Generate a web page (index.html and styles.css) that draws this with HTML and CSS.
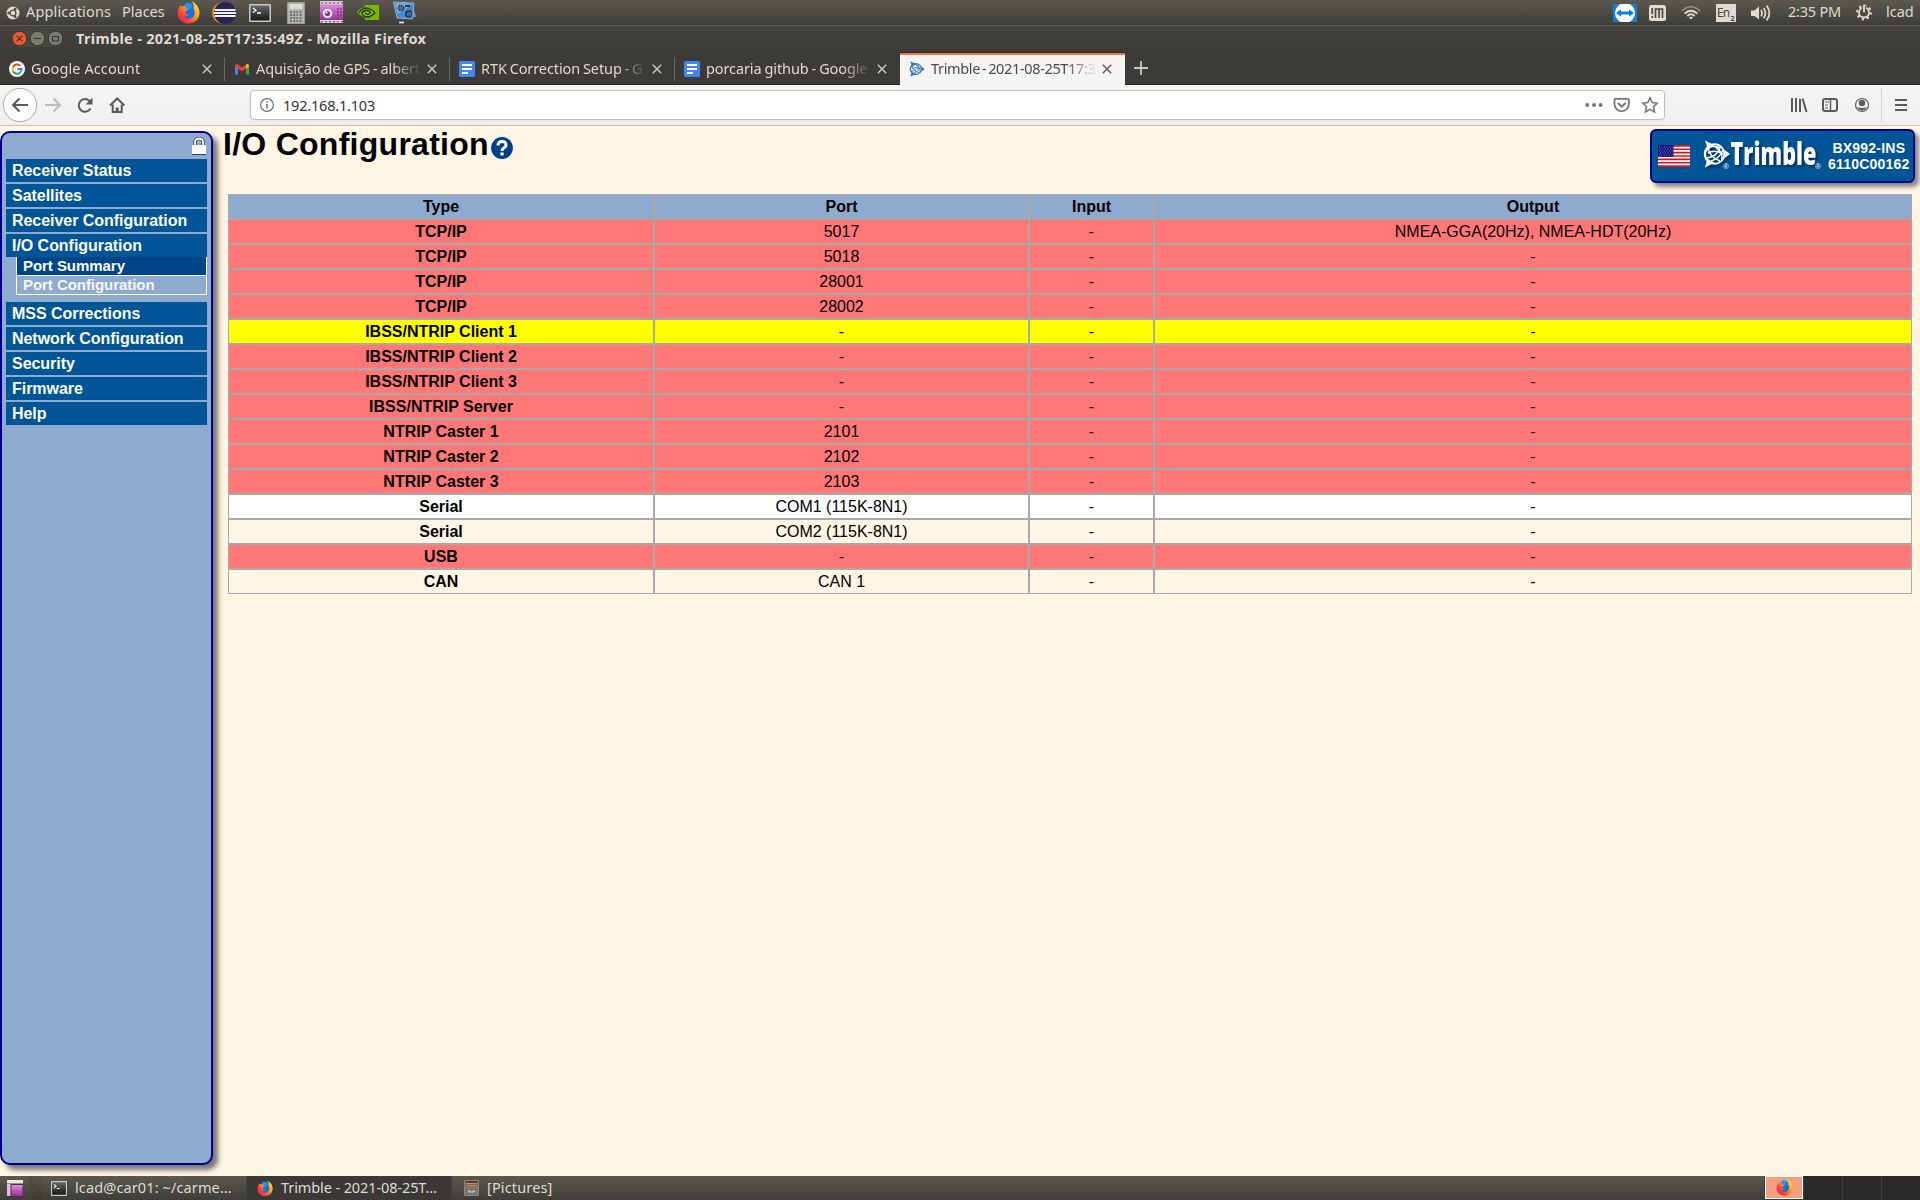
FILE: index.html
```html
<!DOCTYPE html>
<html lang="en">
<head>
<meta charset="utf-8">
<title>Trimble - 2021-08-25T17:35:49Z</title>
<link rel="stylesheet" href="styles.css">
</head>
<body>
<svg class="defs" width="0" height="0" aria-hidden="true">
  <defs>
    <linearGradient id="ffo" x1="1" y1="0" x2="0" y2="1"><stop offset="0" stop-color="#fff14a"/><stop offset=".4" stop-color="#ffa11c"/><stop offset=".7" stop-color="#ff4030"/><stop offset="1" stop-color="#d8178c"/></linearGradient>
    <linearGradient id="pur" x1="0" y1="0" x2="0" y2="1"><stop offset="0" stop-color="#dd8fd8"/><stop offset="1" stop-color="#9a2e98"/></linearGradient>
    <linearGradient id="scr" x1="0" y1="0" x2="0" y2="1"><stop offset="0" stop-color="#666"/><stop offset="1" stop-color="#171717"/></linearGradient>
    <symbol id="firefox" viewBox="0 0 24 24">
      <circle cx="12" cy="13" r="10" fill="#1c6fe0"/>
      <path d="M8 2.500C12 1 15 2 16 4L14 9L8 8Z" fill="#1598ee"/>
      <path d="M3.500 4.500C1 8 .5 12 1 15c1 5 5.500 8.500 11 8.500 6.500 0 11.300-4.800 11.500-11C23.600 8 20.500 2.500 15.500.5c2 3 2.500 5 1.500 7 2.500 3 2 9-2 10.500-4 1.500-7-.5-7.500-3 2 .8 3.500.5 5-1-2.500.3-4-1-4-2.500.5-1.500 2.500-1 3.500-2.500C10 8 9 7 8.500 5.500 6 5.500 4.500 6 3.500 4.500Z" fill="url(#ffo)"/>
    </symbol>
    <symbol id="docs" viewBox="0 0 16 16"><rect width="16" height="16" rx="1.500" fill="#4285f4"/><path d="M3 4h10M3 8h10M3 12h6" stroke="#fff" stroke-width="1.800"/></symbol>
    <symbol id="close" viewBox="0 0 10 10"><path d="M.8.8l8.400 8.400M9.200.8L.8 9.200" stroke="currentColor" stroke-width="1.500" fill="none"/></symbol>
    <symbol id="terminal" viewBox="0 0 22 18"><rect width="22" height="18" rx="1" fill="#c8c8c4"/><rect x="1.500" y="1.500" width="19" height="15" fill="url(#scr)"/><path d="M4 4l3 2.200L4 8.500M8 9h4" stroke="#fff" stroke-width="1.300" fill="none"/></symbol>
    <symbol id="globe" viewBox="0 0 27 28"><path d="M2 .5L12 5.500Q3 8 3 14T12 22.500L2 27.500L4 20Q-2 14 4 7ZM20.500 9L27 14L20.500 19Q23 14 20.500 9Z" fill="currentColor"/><circle cx="11.500" cy="14" r="9.800" fill="none" stroke="currentColor" stroke-width="1.800"/><path d="M2 12Q9 3 17 8Q14 17 3 18M5 7Q6 17 17 21M9 5Q20 10 19 20M8 21Q16 19 20 10M5 13Q12 9 20 14" fill="none" stroke="currentColor" stroke-width="1.500"/></symbol>
  </defs>
</svg>

<header class="panel">
  <svg class="ubuntu" width="14" height="14" viewBox="0 0 14 14"><circle cx="7" cy="7" r="6.500" fill="#dfdbd2"/><circle cx="7" cy="7" r="2.900" fill="none" stroke="#514f48" stroke-width="1.400"/><g fill="#514f48"><circle cx="2.700" cy="7" r="1.400"/><circle cx="9.200" cy="3.200" r="1.400"/><circle cx="9.200" cy="10.800" r="1.400"/></g></svg>
  <span class="menu apps">Applications</span>
  <span class="menu places">Places</span>
  <div class="launchers">
    <svg width="23" height="23"><use href="#firefox"/></svg>
    <svg class="eclipse" width="24" height="22" viewBox="0 0 24 22"><circle cx="10.500" cy="11" r="10.500" fill="#f7941e"/><circle cx="13" cy="11" r="11" fill="#2c2255"/><path d="M2.500 8h21M2 11h22M2.500 14h21" stroke="#f0eef8" stroke-width="1.800"/></svg>
    <svg class="term" width="22" height="18"><use href="#terminal"/></svg>
    <svg class="calc" width="18" height="22" viewBox="0 0 18 22"><rect width="18" height="22" rx="1" fill="#9a9a96"/><rect x="1" y="1" width="16" height="20" fill="#b4b4b0"/><rect x="2.500" y="2" width="13" height="5" fill="#dcdfd6"/><g stroke="#5a5a58" stroke-width="1.700" stroke-dasharray="2 1.200"><path d="M3 10h8M3 13h8M3 16h8M3 19h8"/></g><path d="M13.500 9v11" stroke="#6e6e70" stroke-width="2" stroke-dasharray="2 1"/></svg>
    <svg class="cam" width="24" height="23" viewBox="0 0 24 23"><rect x="0" y="0" width="23" height="22" rx="1" fill="#d9cdd6"/><rect x="0" y="3.500" width="23" height="15.500" fill="url(#pur)"/><path d="M1 2h22M1 20.800h22" stroke="#8b7284" stroke-width="1.500" stroke-dasharray="2 2"/><circle cx="7.500" cy="12.500" r="4.800" fill="#e6dce6"/><circle cx="7.500" cy="12.500" r="2.600" fill="#78437c"/><circle cx="6.500" cy="11.500" r="1" fill="#fff"/><path d="M17 8h5M17 11h5M17 14h5" stroke="#8a3289" stroke-width="1.500" stroke-dasharray="2 1"/></svg>
    <svg class="nv" width="22" height="15" viewBox="0 0 22 15"><path d="M8 0h14v15H8z" fill="#76b900"/><path d="M0 7Q4 1.500 11 2.500Q17 4 19 8Q14 14 8 12.500Q3 11 0 7Z" fill="#76b900"/><path d="M2 7.500Q6 2 12 3.500Q16 5 18 8Q14 12 10 12Q5 11 5 7.500Q8 4 12 6Q14 7 12.500 8.500Q10 10.500 8 7.500" fill="none" stroke="#273310" stroke-width="1.300"/></svg>
    <svg class="shot" width="24" height="23" viewBox="0 0 24 23"><path d="M.5 1L21 2L19.500 18L4 17Z" fill="#4a86c8" stroke="#a9bccf" stroke-width=".8"/><path d="M2 2L20 3L5 13Z" fill="#79aee6"/><circle cx="8" cy="7" r="2.700" fill="#4d6f97" stroke="#222" stroke-width="1.300" stroke-dasharray="1.500 1"/><path d="M12 5h5" stroke="#222" stroke-width="1.800"/><circle cx="16" cy="13" r="3.200" fill="#356aa8" stroke="#1c2e48" stroke-width="1.200"/><path d="M20 7l3.500 9h-5Z" fill="#7ea6cf" opacity=".8"/><path d="M6 21.500h5" stroke="#ddd" stroke-width="1.800"/></svg>
  </div>
  <div class="indicators">
    <svg width="24" height="18" viewBox="0 0 24 18"><rect width="24" height="18" fill="#0e7fe1"/><circle cx="12" cy="9" r="10" fill="#fff"/><path d="M3 9l5-3.800v2.300h8V5.200L21 9l-5 3.800v-2.300H8v2.300Z" fill="#0e7fe1"/></svg>
    <svg class="im" width="17" height="16" viewBox="0 0 17 16"><rect width="17" height="16" rx="2.500" fill="#dfdbd2"/><path d="M3.200 3v6M3.200 11v2M6.500 13V4H13.500V13M10 4v9" stroke="#4a4943" stroke-width="1.700" fill="none"/></svg>
    <svg class="wifi" width="20" height="14" viewBox="0 0 20 14"><g fill="none" stroke="#dfdbd2"><path d="M.8 5Q10-3.500 19.200 5" stroke-width="1.500" opacity=".5"/><path d="M3.600 7.600Q10 1.700 16.400 7.600" stroke-width="1.900"/><path d="M6.300 10Q10 6.500 13.700 10" stroke-width="1.900"/></g><path d="M8 11.500Q10 9.800 12 11.500L10 13.600Z" fill="#dfdbd2"/></svg>
    <span class="lang">En<i>2</i></span>
    <svg class="vol" width="20" height="18" viewBox="0 0 20 18"><path d="M0 6.500h3.500L8 2.500v13L3.500 12H0Z" fill="#dfdbd2"/><path d="M10 6q2 3.200 0 6.200M12.700 4q3.500 5 0 10.200M15.600 1.500q5.500 7.500 0 15" fill="none" stroke="#dfdbd2" stroke-width="1.700"/></svg>
    <span class="clock">2:35 PM</span>
    <svg class="gear" width="16" height="17" viewBox="0 0 16 17"><circle cx="8" cy="8.500" r="5" fill="none" stroke="#dfdbd2" stroke-width="1.800"/><circle cx="8" cy="8.500" r="6.800" fill="none" stroke="#dfdbd2" stroke-width="2.200" stroke-dasharray="2.200 3.140"/><path d="M6 1.500h4V9H6Z" fill="#504e47"/><path d="M8 .8v7.500" stroke="#dfdbd2" stroke-width="1.900"/></svg>
    <span class="user">lcad</span>
  </div>
</header>

<div class="titlebar">
  <svg width="54" height="18" viewBox="0 0 54 18"><rect x="1" y="1" width="52" height="16" rx="8" fill="#484741"/><circle cx="9.500" cy="8.500" r="7.300" fill="#e9592b" stroke="#33322e"/><circle cx="27.500" cy="8.500" r="7.300" fill="#7b7a73" stroke="#33322e"/><circle cx="45.500" cy="8.500" r="7.300" fill="#7b7a73" stroke="#33322e"/><path d="M6.800 5.800l5.400 5.400M12.200 5.800L6.800 11.200M24 8.500h7M42.500 6.500h6v4.500h-6z" fill="none" stroke="#373632" stroke-width="1.200"/></svg>
  <span>Trimble - 2021-08-25T17:35:49Z - Mozilla Firefox</span>
</div>

<nav class="tabs">
  <div class="tab"><svg class="fav" viewBox="0 0 16 16"><circle cx="8" cy="8" r="8" fill="#fff"/><g fill="none" stroke-width="2"><path d="M11.300 4.700A4.600 4.600 0 0 0 4 6" stroke="#ea4335"/><path d="M4 6a4.600 4.600 0 0 0 0 4.200" stroke="#fbbc05"/><path d="M4 10.200a4.600 4.600 0 0 0 7.200 1.200" stroke="#34a853"/><path d="M11.200 11.400a4.600 4.600 0 0 0 1.400-3.400H8.200" stroke="#4285f4"/></g></svg><span class="label t1">Google Account</span><svg class="x"><use href="#close"/></svg></div>
  <div class="tab"><svg class="fav" viewBox="0 0 16 16"><path d="M1 13.500V4l3 2v7.500Z" fill="#4285f4"/><path d="M12 13.500V6l3-2v9.500Z" fill="#34a853"/><path d="M1 4.500Q1.500 2 4 3.500L8 6.500L12 3.500V7.500L8 10.500L4 7.500L1 6Z" fill="#ea4335"/><path d="M12 3.500Q14.500 2 15 4.500V6L12 7.500Z" fill="#fbbc04"/></svg><span class="label t2">Aquisição de GPS - albert</span><svg class="x"><use href="#close"/></svg></div>
  <div class="tab"><svg class="fav"><use href="#docs"/></svg><span class="label t3">RTK Correction Setup - G</span><svg class="x"><use href="#close"/></svg></div>
  <div class="tab last"><svg class="fav"><use href="#docs"/></svg><span class="label t4">porcaria github - Google</span><svg class="x"><use href="#close"/></svg></div>
  <div class="tab active"><svg class="fav tr"><use href="#globe"/></svg><span class="label t5">Trimble - 2021-08-25T17:3</span><svg class="x"><use href="#close"/></svg></div>
  <svg class="plus" width="14" height="14" viewBox="0 0 14 14"><path d="M7 0v14M0 7h14" stroke="#c9c7c1" stroke-width="1.800"/></svg>
</nav>

<div class="toolbar">
  <svg class="navicons" width="130" height="40" viewBox="0 0 130 40"><circle cx="20" cy="20" r="16.600" fill="#fdfdfd" stroke="#b0aeab"/><g fill="none" stroke="#5b5a58" stroke-width="2"><path d="M28 20H13M19.500 13.500L13 20l6.500 6.500"/><path d="M45 20h15M53.500 13.500L60 20l-6.500 6.500" stroke="#bdbbb8"/><path d="M89.500 16A6.300 6.300 0 1 0 90.500 23.500"/><path d="M110 20.500l7.200-7 7.200 7M112.700 19.500V27h9v-7.500"/><path d="M117.200 27v-4.500" stroke-width="3"/></g><path d="M92.500 12.500v7h-7Z" fill="#5b5a58"/></svg>
  <div class="url">
    <svg width="14" height="14" viewBox="0 0 14 14"><circle cx="7" cy="7" r="6.400" fill="none" stroke="#6f6e6c" stroke-width="1.200"/><path d="M7 6v4.500M7 3.200v1.500" stroke="#6f6e6c" stroke-width="1.500"/></svg>
    <span>192.168.1.103</span>
    <svg class="acts" width="74" height="18" viewBox="0 0 74 18"><g fill="#777674"><circle cx="3.200" cy="9" r="2"/><circle cx="10" cy="9" r="2"/><circle cx="16.600" cy="9" r="2"/></g><g fill="none" stroke="#777674" stroke-width="1.800"><path d="M31.500 2.800h12.400a1 1 0 0 1 1 1V8a7.200 7.200 0 0 1-14.400 0V3.800a1 1 0 0 1 1-1Z"/><path d="M33.800 7l3.900 3.600L41.600 7" stroke-width="2"/><path d="M66 1.800l2.200 4.800 5 .6-3.700 3.500 1 5.200L66 13.400l-4.500 2.500 1-5.200L58.800 7.200l5-.6Z" stroke-width="1.600"/></g></svg>
  </div>
  <svg class="tools" width="120" height="34" viewBox="0 0 120 34"><g fill="none" stroke="#5b5a58" stroke-width="2"><path d="M2 10v14M6 10v14M10 11v13M12.500 10.500l4 13.500"/><rect x="33" y="11" width="14" height="12" rx="2"/><path d="M40.500 11v12" stroke-width="1.500"/><path d="M35 14h4M35 17h3M35 20h3" stroke-width="1.200"/><circle cx="72" cy="17" r="6.500" stroke-width="1.200"/><path d="M105 12h12M105 17h12M105 22h12"/></g><circle cx="72" cy="15" r="3.200" fill="#5b5a58"/><path d="M67.300 19q4.700 2 9.400 0q-1.500 3.500-4.700 3.500t-4.700-3.500Z" fill="#5b5a58"/><path d="M91.500 0v34" stroke="#d4d2cf"/></svg>
</div>

<main class="page">
  <aside class="side">
    <svg class="lock" width="14" height="18" viewBox="0 0 14 18"><path d="M3 9V5.500Q3 1.500 7 1.500T11 5.500V9" fill="none" stroke="#333" stroke-width="3.200"/><path d="M3 9V5.500Q3 1.500 7 1.500T11 5.500V9" fill="none" stroke="#fff" stroke-width="1.800"/><rect x="0" y="8" width="14" height="9" fill="#fff"/><path d="M0 17.500h14" stroke="#444"/></svg>
    <ul>
      <li>Receiver Status</li><li>Satellites</li><li>Receiver Configuration</li><li class="open">I/O Configuration</li>
    </ul>
    <ul class="sub"><li class="on">Port Summary</li><li>Port Configuration</li></ul>
    <ul>
      <li>MSS Corrections</li><li>Network Configuration</li><li>Security</li><li>Firmware</li><li>Help</li>
    </ul>
  </aside>
  <section class="content">
    <div class="head">
      <h1>I/O Configuration</h1>
      <svg class="help" width="24" height="26" viewBox="0 0 24 26"><circle cx="12" cy="13" r="11.900" fill="#fff" stroke="#dfe0e4" stroke-width=".5"/><circle cx="12" cy="13" r="10.900" fill="#003f87"/><path d="M8 10.500Q8 6.500 12 6.500T16 10Q16 12 13.700 13Q12 14 12 16" fill="none" stroke="#fff" stroke-width="3"/><path d="M10.400 17.500h3.300v3h-3.300Z" fill="#fff"/></svg>
      <div class="badge">
        <svg class="flag" width="32" height="22" viewBox="0 0 32 22"><rect width="32" height="22" fill="#fff"/><path d="M0 .85h32M0 4.230h32M0 7.600h32M0 11h32M0 14.400h32M0 17.760h32M0 21.150h32" stroke="#d8141c" stroke-width="1.700"/><rect width="15.500" height="11.800" fill="#10107c"/><path d="M1 2h14M2 4h13M1 6h14M2 8h13M1 10h14" stroke="#8f8fd0" stroke-width=".9" stroke-dasharray="1 1.500"/></svg>
        <svg class="logo" width="121" height="32" viewBox="0 0 121 32"><g class="mark"><use href="#globe" x="0" y="1" width="27" height="28"/><text class="word" x="27.500" y="26.300" textLength="86" lengthAdjust="spacingAndGlyphs">Trimble</text></g><text class="reg" x="20" y="29.500">®</text><text class="reg" x="112" y="29.500">®</text></svg>
        <div class="unit">BX992-INS<br>6110C00162</div>
      </div>
    </div>
    <table>
      <colgroup><col class="c1"><col class="c2"><col class="c3"><col class="c4"></colgroup>
      <tr class="hd"><th>Type</th><th>Port</th><th>Input</th><th>Output</th></tr>
      <tr class="red"><th>TCP/IP</th><td>5017</td><td>-</td><td>NMEA-GGA(20Hz), NMEA-HDT(20Hz)</td></tr>
      <tr class="red"><th>TCP/IP</th><td>5018</td><td>-</td><td>-</td></tr>
      <tr class="red"><th>TCP/IP</th><td>28001</td><td>-</td><td>-</td></tr>
      <tr class="red"><th>TCP/IP</th><td>28002</td><td>-</td><td>-</td></tr>
      <tr class="yellow"><th>IBSS/NTRIP Client 1</th><td>-</td><td>-</td><td>-</td></tr>
      <tr class="red"><th>IBSS/NTRIP Client 2</th><td>-</td><td>-</td><td>-</td></tr>
      <tr class="red"><th>IBSS/NTRIP Client 3</th><td>-</td><td>-</td><td>-</td></tr>
      <tr class="red"><th>IBSS/NTRIP Server</th><td>-</td><td>-</td><td>-</td></tr>
      <tr class="red"><th>NTRIP Caster 1</th><td>2101</td><td>-</td><td>-</td></tr>
      <tr class="red"><th>NTRIP Caster 2</th><td>2102</td><td>-</td><td>-</td></tr>
      <tr class="red"><th>NTRIP Caster 3</th><td>2103</td><td>-</td><td>-</td></tr>
      <tr class="white"><th>Serial</th><td>COM1 (115K-8N1)</td><td>-</td><td>-</td></tr>
      <tr><th>Serial</th><td>COM2 (115K-8N1)</td><td>-</td><td>-</td></tr>
      <tr class="red"><th>USB</th><td>-</td><td>-</td><td>-</td></tr>
      <tr><th>CAN</th><td>CAN 1</td><td>-</td><td>-</td></tr>
    </table>
  </section>
</main>

<footer class="taskbar">
  <svg class="desk" width="16" height="17" viewBox="0 0 16 17"><rect y="0" width="16" height="17" rx="1" fill="#4e2b4c"/><rect width="16" height="3.500" fill="#eeead8"/><rect x="0" y="4" width="3.500" height="12" fill="#e3b9df"/><rect x="4.500" y="5" width="11" height="11" fill="url(#pur)"/></svg>
  <span class="grip"></span>
  <div class="task"><svg width="16" height="15" viewBox="0 0 22 18" preserveAspectRatio="none"><use href="#terminal"/></svg><span class="k1">lcad@car01: ~/carme…</span></div>
  <div class="task cur"><svg width="16" height="17"><use href="#firefox"/></svg><span class="k2">Trimble - 2021-08-25T…</span></div>
  <div class="task pics"><svg width="15" height="16" viewBox="0 0 15 16"><rect width="15" height="16" rx="1" fill="#8b8880"/><rect x="1.500" y="1" width="12" height="5.500" fill="#43352b"/><path d="M2 3.500h11M2 5.500h11" stroke="#c98959" stroke-width="1.300"/><rect x="1" y="7.500" width="13" height="7.500" fill="#77756f"/><path d="M5 10v2h5v-2" fill="none" stroke="#ddd"/></svg><span class="k3">[Pictures]</span></div>
  <div class="spaces"><div class="ws sel"><svg width="17" height="17"><use href="#firefox"/></svg></div><div class="ws"></div><div class="ws"></div><div class="ws"></div></div>
</footer>
</body>
</html>
```
FILE: styles.css
```css
* { box-sizing: border-box; }
body { margin: 0; width: 1920px; height: 1200px; overflow: hidden; display: flex; flex-direction: column; background: #fff5e4; font-family: "Noto Sans", "Open Sans", sans-serif; font-size: 14.500px; color: #dfdbd2; }
svg { flex: none; display: block; }
.defs { position: absolute; }
span { white-space: nowrap; }

/* desktop panel */
.panel { height: 25px; flex: none; display: flex; align-items: center; background: linear-gradient(#5b594f, #3e3d38); padding-left: 6px; line-height: 23px; }
.menu { flex: none; height: 25px; }
.apps { margin-left: 6px; width: 96px; letter-spacing: .15px; }
.places { width: 55px; }
.launchers { display: flex; align-items: center; }
.eclipse { margin-left: 12px; }
.term { margin-left: 13px; }
.calc { margin-left: 16px; }
.cam { margin-left: 15px; }
.nv { margin-left: 13px; }
.shot { margin-left: 14px; }
.indicators { margin-left: auto; display: flex; align-items: center; width: 307px; }
.im { margin-left: 12px; }
.wifi { margin-left: 15px; }
.lang { margin-left: 15px; width: 20px; height: 18px; background: #dfdbd2; color: #45443f; font-size: 12px; line-height: 18px; display: flex; padding-left: 1px; letter-spacing: -.8px; }
.lang i { font-size: 7px; line-height: 29px; font-style: normal; font-weight: bold; margin-left: 1px; }
.vol { margin-left: 15px; }
.clock { margin-left: 17px; width: 68px; height: 25px; letter-spacing: -.2px; }
.user { margin-left: 14px; height: 25px; }

/* window chrome */
.titlebar { height: 27px; flex: none; display: flex; align-items: center; background: linear-gradient(#45443f, #3c3b37); border-top: 1px solid #5f5d57; padding-left: 10px; font-weight: bold; font-size: 14.500px; letter-spacing: .33px; }
.titlebar span { margin: -2px 0 0 12px; line-height: 24px; }
.tabs { height: 33px; flex: none; display: flex; background: #3c3b37; border-bottom: 1px solid #282725; }
.tab { width: 225px; display: flex; align-items: center; padding: 1px 0 0 9px; position: relative; }
.tab:not(.active):not(.last)::after { content: ""; position: absolute; right: 0; top: 5px; width: 1px; height: 24px; background: #6a6964; }
.fav { width: 16px; height: 16px; }
.label { margin: -2px 0 0 6px; width: 165px; -webkit-mask-image: linear-gradient(90deg, #000 136px, transparent 166px); mask-image: linear-gradient(90deg, #000 136px, transparent 166px); }
.t1 { letter-spacing: .1px; }
.t2 { letter-spacing: -.1px; word-spacing: -.8px; }
.t3 { letter-spacing: -.1px; word-spacing: -.8px; }
.t4 { letter-spacing: -.1px; word-spacing: -.7px; }
.t5 { letter-spacing: -.35px; word-spacing: -1.500px; }
.x { width: 10px; height: 10px; margin-left: 6px; color: #c9c7c1; }
.active { background: #f5f4f2; color: #4c4b48; height: 33px; border-top: 1px solid #282725; padding-top: 0; box-shadow: inset 0 2px #f07746; }
.active .x { color: #5f5e5b; }
.tr { color: #2f76bb; }
.plus { margin: 9px 0 0 9px; }
.toolbar { height: 41px; flex: none; display: flex; background: linear-gradient(#f5f4f2, #f1f0ee); border-bottom: 1px solid #c6c3bf; }
.url { width: 1415px; height: 30px; margin: 5px 0 0 120px; background: #fff; border: 1px solid #c2bfbb; border-radius: 4px; display: flex; align-items: center; padding-left: 9px; color: #33322f; box-shadow: 0 1px 3px #0000000d; }
.url span { margin-left: 9px; line-height: 28px; letter-spacing: -.2px; }
.acts { margin: 0 6px 0 auto; }
.tools { margin: 3px 0 0 125px; }

/* receiver web page */
.page { height: 1050px; flex: none; display: flex; background: #fff5e4; font-family: "Liberation Sans", Arial, sans-serif; color: #000; font-size: 16px; }
.side { width: 213px; height: 1034px; margin-top: 5px; border: 2px solid #00008b; border-radius: 10px; background: #8faacf; box-shadow: 5px 5px 5px #777; padding: 3px 4px; flex: none; color: #fff; font-weight: bold; }
.lock { margin: 1px 0 4px 186px; }
ul { list-style: none; margin: 0; padding: 0; width: 201px; }
.side li { height: 23px; margin-bottom: 2px; background: #005596; padding-left: 6px; line-height: 23px; letter-spacing: -.04px; }
.side .open { margin-bottom: 0; }
.side .sub { width: 191px; margin: 0 0 7px 10px; border: solid #fff; border-width: 0 1px 1px; font-size: 15px; }
.side .sub li { margin: 0; height: 18px; line-height: 18px; background: none; color: #f4f6fb; letter-spacing: -.05px; }
.side .sub .on { height: 19px; background: #00458a; border-bottom: 1px solid #fff; color: #fff; }
.content { width: 1707px; padding-left: 10px; }
.head { height: 68px; display: flex; }
h1 { font-size: 32px; line-height: 36px; margin: 0; letter-spacing: .27px; }
.help { margin: 9px 0 0 1px; }
.badge { margin: 3px 5px 0 auto; width: 265px; height: 54px; border: 2px solid #00008b; border-radius: 6px; background: #005596; box-shadow: 4px 4px 4px #888; color: #fff; display: flex; align-items: center; padding-left: 6px; }
.logo { margin: 0 0 2px 13px; }
.mark { filter: drop-shadow(2px 2px 1px #003058); }
.word { font: 800 32px "Open Sans", sans-serif; fill: #fff; }
.reg { font: 8px "Liberation Sans", sans-serif; fill: #fff; }
.unit { font-weight: bold; font-size: 14px; line-height: 16px; text-align: center; margin-left: 4px; letter-spacing: .22px; }
table { width: 1684px; margin-left: 5px; border-collapse: separate; border-spacing: 0; table-layout: fixed; border: 0; }
.c1 { width: 426px; }
.c2 { width: 375px; }
.c3 { width: 125px; }
.c4 { width: 758px; }
th, td { height: 25px; padding: 0; border: 1px solid #a9a9a9; text-align: center; line-height: 23px; }
.hd { background: #8faacf; }
.red { background: #ff7777; }
.yellow { background: #ff0; }
.white { background: #fff; }

/* bottom panel */
.taskbar { height: 24px; flex: none; display: flex; align-items: center; background: linear-gradient(#5b594f, #3e3d38); padding-left: 7px; }
.grip { width: 12px; height: 24px; margin-left: 7px; border-left: 1px solid #45443e; background: repeating-linear-gradient(45deg, #0002 0 1px, transparent 1px 3px); }
.task { width: 205px; height: 24px; display: flex; align-items: center; padding-left: 9px; border-right: 1px solid #45443e; }
.task span { margin: -2px 0 0 8px; line-height: 22px; }
.k1 { letter-spacing: .12px; }
.k2 { letter-spacing: -.1px; }
.k3 { letter-spacing: .15px; }
.task.cur { background: #3a3935; padding-left: 10px; }
.task.pics { padding-left: 12px; width: 207px; border-right: 0; }
.spaces { margin-left: auto; display: flex; background: #3f3e3a; }
.ws { width: 38px; height: 24px; margin-left: 1px; background: #2b2a28; display: flex; justify-content: center; align-items: center; }
.ws.sel { height: 23px; background: #f4a080; border: 1px solid #fff; }
```
